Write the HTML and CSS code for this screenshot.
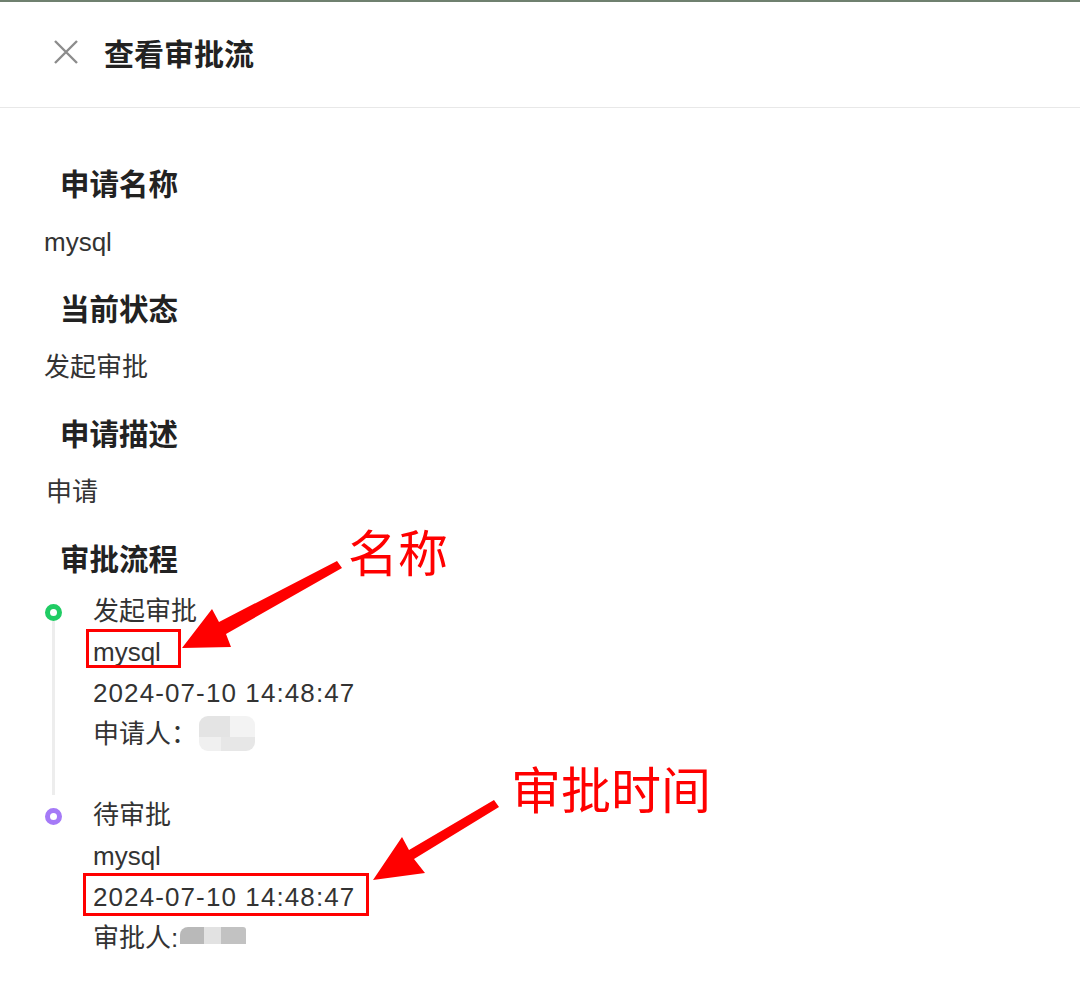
FILE: index.html
```html
<!DOCTYPE html>
<html lang="zh-CN">
<head>
<meta charset="utf-8">
<title>查看审批流</title>
<link rel="stylesheet" href="styles.css">
</head>
<body>
<div class="page">
  <div class="topline"></div>
  <header class="header">
    <svg class="close" width="26" height="26" viewBox="0 0 26 26">
      <path d="M2 2 L24 24 M24 2 L2 24" stroke="#8c8c8c" stroke-width="2.4" fill="none"/>
    </svg>
    <h1 class="title">查看审批流</h1>
  </header>
  <main class="content">
    <section class="sec">
      <h2 class="label">申请名称</h2>
      <div class="value">mysql</div>
    </section>
    <section class="sec">
      <h2 class="label">当前状态</h2>
      <div class="value">发起审批</div>
    </section>
    <section class="sec">
      <h2 class="label">申请描述</h2>
      <div class="value v-desc">申请</div>
    </section>
    <section class="sec">
      <h2 class="label">审批流程</h2>
      <div class="timeline">
        <div class="tl-item">
          <div class="tl-rail">
            <span class="dot dot-green"></span>
            <span class="rail-line"></span>
          </div>
          <div class="tl-body">
            <div class="line">发起审批</div>
            <div class="line">mysql</div>
            <div class="line date">2024-07-10 14:48:47</div>
            <div class="line">申请人：<span class="blur blur-a"></span></div>
          </div>
        </div>
        <div class="tl-item last">
          <div class="tl-rail">
            <span class="dot dot-purple"></span>
          </div>
          <div class="tl-body">
            <div class="line">待审批</div>
            <div class="line">mysql</div>
            <div class="line date">2024-07-10 14:48:47</div>
            <div class="line">审批人:<span class="blur blur-b"></span></div>
          </div>
        </div>
      </div>
    </section>
  </main>

  <div class="annot">
    <svg class="annot-svg" width="1080" height="995" viewBox="0 0 1080 995">
      <rect x="87.5" y="630.5" width="92" height="36" fill="none" stroke="#ff0000" stroke-width="3"/>
      <rect x="84.5" y="874.5" width="283" height="40" fill="none" stroke="#ff0000" stroke-width="3"/>
      <polygon fill="#ff0000" points="182,648 212,609 219,622 337,561 342,568 226,634 231,647"/>
      <polygon fill="#ff0000" points="373,880 402,837 409,850 494,800 499,807 414,859 425,873"/>
    </svg>
    <span class="annot-text at-name">名称</span>
    <span class="annot-text at-time">审批时间</span>
  </div>
</div>
</body>
</html>
```

FILE: styles.css
```css
* { box-sizing: border-box; }
html, body { margin: 0; padding: 0; background: #ffffff; }
body {
  font-family: "Liberation Sans", "Noto Sans CJK SC", sans-serif;
  color: #333333;
}
.page {
  position: relative;
  width: 1080px;
  height: 995px;
  overflow: hidden;
}
.topline {
  height: 2px;
  background: #6f806f;
}
.header {
  height: 106px;
  display: flex;
  align-items: center;
  padding-left: 53px;
  padding-bottom: 6px;
  gap: 25px;
  border-bottom: 1px solid #e8e8e8;
}
.close { flex: none; margin-top: 1px; }
.title {
  margin: 0;
  font-family: "Noto Sans CJK SC", sans-serif;
  font-size: 30px;
  font-weight: 700;
  color: #222222;
  line-height: 40px;
}
.content {
  padding: 49px 0 0 44px;
}
.sec { margin: 0 0 15px 0; }
.label {
  margin: 0;
  padding-left: 16px;
  font-family: "Noto Sans CJK SC", sans-serif;
  font-size: 29.5px;
  font-weight: 700;
  color: #222222;
  line-height: 50px;
}
.value {
  margin-top: 10px;
  font-size: 26px;
  line-height: 50px;
  color: #333333;
}
.v-desc { padding-left: 2px; }
.timeline {
  margin-top: 9px;
}
.tl-item {
  display: grid;
  grid-template-columns: 18px 1fr;
  column-gap: 31px;
  padding-bottom: 40px;
}
.tl-item.last { padding-bottom: 0; }
.tl-rail {
  display: flex;
  flex-direction: column;
  align-items: center;
  padding-top: 13px;
  margin-bottom: -40px;
}
.tl-item.last .tl-rail { margin-bottom: 0; }
.dot {
  width: 17px;
  height: 17px;
  border-radius: 50%;
  border: 5px solid #20cc64;
  background: #ffffff;
  flex: none;
}
.dot-purple { border-color: #a57af7; }
.rail-line {
  flex: 1;
  width: 3px;
  background: #ededed;
}
.tl-body { font-size: 26px; color: #333333; }
.line {
  line-height: 41px;
  height: 41px;
  white-space: nowrap;
}
.date { letter-spacing: 1.1px; }
.blur {
  display: inline-block;
  vertical-align: middle;
}
.blur-a {
  width: 56px;
  height: 35px;
  border-radius: 9px;
  background:
    linear-gradient(90deg, #e4e4e4 0 55%, #f3f3f3 55% 100%) top / 100% 60% no-repeat,
    linear-gradient(90deg, #f0f0f0 0 40%, #e7e7e7 40% 100%) bottom / 100% 40% no-repeat;
  margin-left: 2px;
  margin-top: -5px;
}
.blur-b {
  width: 66px;
  height: 17px;
  border-radius: 8px 3px 0 0;
  background: linear-gradient(90deg, #b9b9b9 0 36%, #e2e2e2 36% 62%, #c2c2c2 62% 100%);
  margin-left: 2px;
  margin-top: -10px;
}
.annot {
  position: absolute;
  left: 0;
  top: 0;
  width: 1080px;
  height: 995px;
  pointer-events: none;
}
.annot-svg { position: absolute; left: 0; top: 0; }
.annot-text {
  position: absolute;
  font-family: "Noto Sans CJK SC", sans-serif;
  font-size: 50px;
  line-height: 50px;
  color: #ff0000;
  font-weight: 400;
  white-space: nowrap;
}
.at-name { left: 348px; top: 525px; }
.at-time { left: 511px; top: 762px; }
```
